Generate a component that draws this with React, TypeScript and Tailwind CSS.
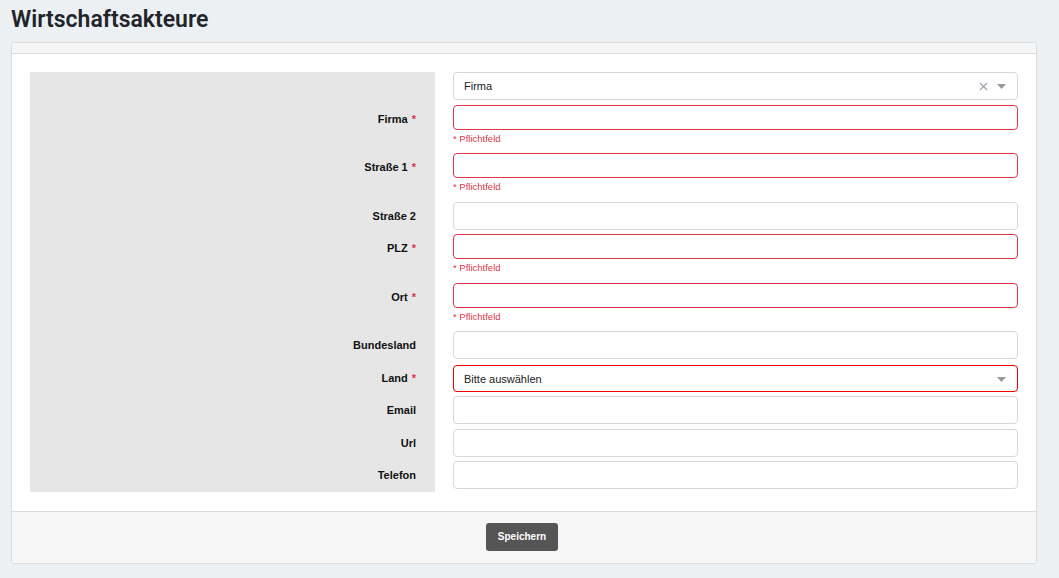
const rows = [
  { label: "", select: "Firma", clearable: true, rowCls: "h-[33px]", inputCls: "h-[28px] border-[#d6d9dd]" },
  { label: "Firma", required: true, error: true, rowCls: "h-[48px]", inputCls: "h-[25px] border-[#dc3545]" },
  { label: "Straße 1", required: true, error: true, rowCls: "h-[49px]", inputCls: "h-[25px] border-[#dc3545]" },
  { label: "Straße 2", rowCls: "h-[32px]", inputCls: "h-[28px] border-[#d6d9dd]" },
  { label: "PLZ", required: true, error: true, rowCls: "h-[49px]", inputCls: "h-[25px] border-[#dc3545]" },
  { label: "Ort", required: true, error: true, rowCls: "h-[48px]", inputCls: "h-[25px] border-[#dc3545]" },
  { label: "Bundesland", rowCls: "h-[34px]", inputCls: "h-[28px] border-[#d6d9dd]" },
  { label: "Land", required: true, select: "Bitte auswählen", rowCls: "h-[31px]", inputCls: "h-[27px] border-[#ee0000]" },
  { label: "Email", rowCls: "h-[33px]", inputCls: "h-[28px] border-[#d6d9dd]" },
  { label: "Url", rowCls: "h-[32px]", inputCls: "h-[28px] border-[#d6d9dd]" },
  { label: "Telefon", rowCls: "h-[31px]", inputCls: "h-[28px] border-[#d6d9dd]" },
];

const Caret = () => (
  <svg width="9" height="5" viewBox="0 0 9 5" className="shrink-0">
    <polygon points="0,0 9,0 4.5,5" fill="#999999" />
  </svg>
);

const ClearX = () => (
  <svg width="9" height="9" viewBox="0 0 9 9" className="shrink-0">
    <path d="M1 1 L8 8 M8 1 L1 8" stroke="#9aa3ad" strokeWidth="1.2" />
  </svg>
);

const App = () => {
  return (
    <div
      className="min-h-[578px] bg-[#edf0f3] pl-[11px] pr-[22px]"
      style={{ fontFamily: '"Liberation Sans", Arial, sans-serif' }}
    >
      <h1
        className="pt-[6px] pb-[8px] text-[23px] leading-[28px] font-semibold text-[#212529]"
        style={{ fontFamily: "Roboto, sans-serif" }}
      >
        Wirtschaftsakteure
      </h1>

      <div className="overflow-hidden rounded-[3px] border border-[#dcdcdc] bg-white">
        <div className="h-[11px] border-b border-[#dcdcdc] bg-[#f5f5f5]" />

        <div className="pt-[18px] pr-[18px] pb-[19px] pl-[18px]">
          {rows.map((row, i) => (
            <div key={i} className={`flex ${row.rowCls}`}>
              <div className="w-[405px] shrink-0 bg-[#e6e6e6] pr-[19px]">
                <div
                  className={`flex items-center justify-end text-[11px] font-bold text-[#111] ${row.inputCls.split(" ")[0]} ${row.error ? "pt-[3px]" : ""}`}
                >
                  {row.label}
                  {row.required && <span className="ml-[4px] text-[#dc3545]">*</span>}
                </div>
              </div>
              <div className="ml-[18px] flex-1">
                {row.select ? (
                  <div
                    className={`flex items-center rounded-[4px] border bg-white pt-[1px] pr-[11px] pl-[10px] text-[11px] text-[#222] ${row.inputCls}`}
                  >
                    <span className="flex-1">{row.select}</span>
                    {row.clearable && (
                      <span className="mr-[9px] flex">
                        <ClearX />
                      </span>
                    )}
                    <Caret />
                  </div>
                ) : (
                  <div className={`rounded-[4px] border bg-white ${row.inputCls}`} />
                )}
                {row.error && (
                  <div className="mt-[3px] text-[9.5px] leading-[12px] text-[#dc3545]">* Pflichtfeld</div>
                )}
              </div>
            </div>
          ))}
        </div>

        <div className="flex h-[52px] items-center justify-center border-t border-[#dcdcdc] bg-[#f6f6f6]">
          <button className="mr-[4px] mb-[2px] h-[28px] w-[72px] rounded-[3px] bg-[#555555] text-[10px] font-bold text-white">
            Speichern
          </button>
        </div>
      </div>
    </div>
  );
};

export default App;
